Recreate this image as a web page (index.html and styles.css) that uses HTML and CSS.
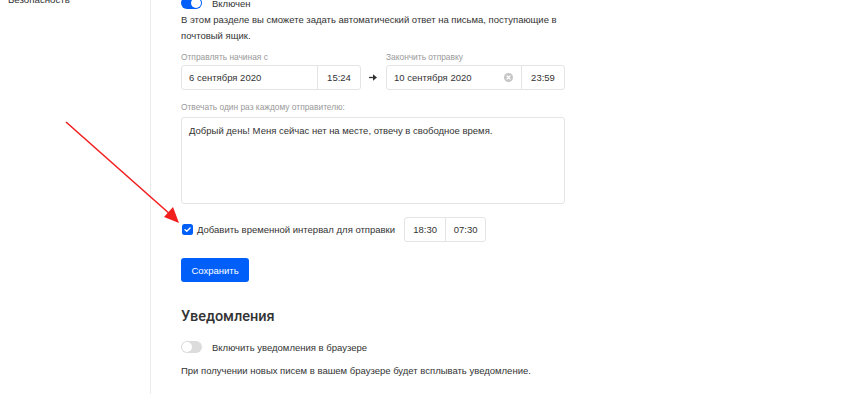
FILE: index.html
```html
<!DOCTYPE html>
<html>
<head>
    <meta charset="utf-8">
    <link rel="stylesheet" href="styles.css">
</head>
<body>
<div class="page">
    <div class="sidebar">
        <div class="nav-item">Безопасность</div>
    </div>

    <div class="main">
        <div class="switch-row first">
            <span class="switch on"><span class="knob"></span></span>
            <span class="switch-label">Включен</span>
        </div>
        <p class="desc">В этом разделе вы сможете задать автоматический ответ на письма, поступающие в почтовый ящик.</p>

        <div class="dates">
            <div class="field start">
                <div class="label">Отправлять начиная с</div>
                <div class="date-input">
                    <span class="date">6 сентября 2020</span>
                    <span class="time">15:24</span>
                </div>
            </div>
            <div class="arrow">
                <svg width="8" height="7" viewBox="0 0 8 7">
                    <path d="M0 3.5 H5" stroke="#333" stroke-width="1.3"/>
                    <polygon points="4,0.3 8,3.5 4,6.7" fill="#333"/>
                </svg>
            </div>
            <div class="field">
                <div class="label">Закончить отправку</div>
                <div class="date-input">
                    <span class="date">10 сентября 2020
                        <svg class="clear" width="9" height="9" viewBox="0 0 10 10">
                            <circle cx="5" cy="5" r="5" fill="#c4c4c4"/>
                            <path d="M3.3 3.3 L6.7 6.7 M6.7 3.3 L3.3 6.7" stroke="#fff" stroke-width="1.4" stroke-linecap="round"/>
                        </svg>
                    </span>
                    <span class="time">23:59</span>
                </div>
            </div>
        </div>

        <div class="label">Отвечать один раз каждому отправителю:</div>
        <div class="textarea">Добрый день! Меня сейчас нет на месте, отвечу в свободное время.</div>

        <div class="interval">
            <span class="checkbox">
                <svg width="11" height="11" viewBox="0 0 11 11">
                    <rect width="11" height="11" rx="2.5" fill="#005ff9"/>
                    <path d="M3 5.7 L4.8 7.3 L8.1 3.9" stroke="#fff" stroke-width="1.4" fill="none" stroke-linecap="round" stroke-linejoin="round"/>
                </svg>
            </span>
            <span class="interval-label">Добавить временной интервал для отправки</span>
            <div class="time-range">
                <span>18:30</span>
                <span>07:30</span>
            </div>
        </div>

        <button class="save">Сохранить</button>

        <h2>Уведомления</h2>
        <div class="switch-row">
            <span class="switch"><span class="knob"></span></span>
            <span class="switch-label">Включить уведомления в браузере</span>
        </div>
        <p class="note">При получении новых писем в вашем браузере будет всплывать уведомление.</p>
    </div>
</div>

<svg class="pointer" width="130" height="120" viewBox="0 0 130 120">
    <line x1="1" y1="1" x2="106" y2="94" stroke="#f21f1f" stroke-width="1.6"/>
    <polygon points="114,102 99,96 108,86" fill="#f21f1f"/>
</svg>
</body>
</html>
```

FILE: styles.css
```css
* {
    box-sizing: border-box;
}

body {
    margin: 0;
    font-family: "Liberation Sans", Arial, sans-serif;
    font-size: 9.5px;
    color: #333;
    background: #fff;
    overflow: hidden;
}

.page {
    display: flex;
    margin-top: -4px;
    height: 398px;
}

.sidebar {
    width: 151px;
    border-right: 1px solid #ececec;
    flex-shrink: 0;
}

.nav-item {
    margin-top: -4px;
    padding: 0 8px;
    line-height: 16px;
    font-size: 9.7px;
}

.main {
    padding-left: 30px;
    width: 414px;
}

.switch-row {
    display: flex;
    align-items: center;
    height: 14px;
}

.switch {
    position: relative;
    width: 21px;
    height: 12px;
    border-radius: 6px;
    background: #dcdcdc;
}

.switch .knob {
    position: absolute;
    top: 1px;
    left: 1px;
    width: 10px;
    height: 10px;
    border-radius: 50%;
    background: #fff;
}

.switch.on {
    background: #005ff9;
}

.switch.on .knob {
    left: 10px;
}

.switch-label {
    margin-left: 10px;
}

.desc {
    margin: 2px 0 0;
    line-height: 16px;
    width: 384px;
}

.label {
    font-size: 8.4px;
    color: #999;
    line-height: 12px;
}

.dates {
    display: flex;
    align-items: flex-end;
    margin-top: 7px;
    margin-bottom: 11px;
}

.field {
    width: 179px;
}

.field.start {
    width: 180px;
}

.field .label {
    margin-bottom: 2px;
}

.date-input {
    display: flex;
    height: 25px;
    border: 1px solid #e4e4e4;
    border-radius: 3px;
}

.date-input .date {
    flex: 1;
    display: flex;
    align-items: center;
    justify-content: space-between;
    padding: 0 7px;
    border-right: 1px solid #e4e4e4;
}

.date-input .time {
    width: 42px;
    display: flex;
    align-items: center;
    justify-content: center;
}

.clear {
    margin-right: 1px;
}

.arrow {
    width: 25px;
    height: 25px;
    display: flex;
    align-items: center;
    justify-content: center;
    padding-right: 2px;
}

.textarea {
    margin-top: 4px;
    height: 87px;
    border: 1px solid #e4e4e4;
    border-radius: 3px;
    padding: 6px 7px;
    line-height: 14px;
}

.interval {
    display: flex;
    align-items: center;
    margin-top: 13px;
}

.checkbox {
    display: flex;
    width: 11px;
    height: 11px;
    margin-left: 1px;
}

.interval-label {
    margin-left: 4px;
}

.time-range {
    display: flex;
    margin-left: 9px;
    height: 25px;
    border: 1px solid #e4e4e4;
    border-radius: 3px;
}

.time-range span {
    width: 40px;
    display: flex;
    align-items: center;
    justify-content: center;
}

.time-range span + span {
    border-left: 1px solid #e4e4e4;
}

.save {
    display: block;
    margin-top: 16px;
    width: 68px;
    height: 24px;
    border: none;
    border-radius: 3px;
    background: #005ff9;
    color: #fff;
    font-family: inherit;
    font-size: 9.5px;
    padding: 0;
}

h2 {
    margin: 25px 0 13px;
    font-family: Roboto, "Liberation Sans", sans-serif;
    font-weight: 500;
    font-size: 14.5px;
    line-height: 20px;
    color: #333;
}

.note {
    margin: 10px 0 0;
    line-height: 14px;
}

.pointer {
    position: absolute;
    left: 65px;
    top: 121px;
}
```
